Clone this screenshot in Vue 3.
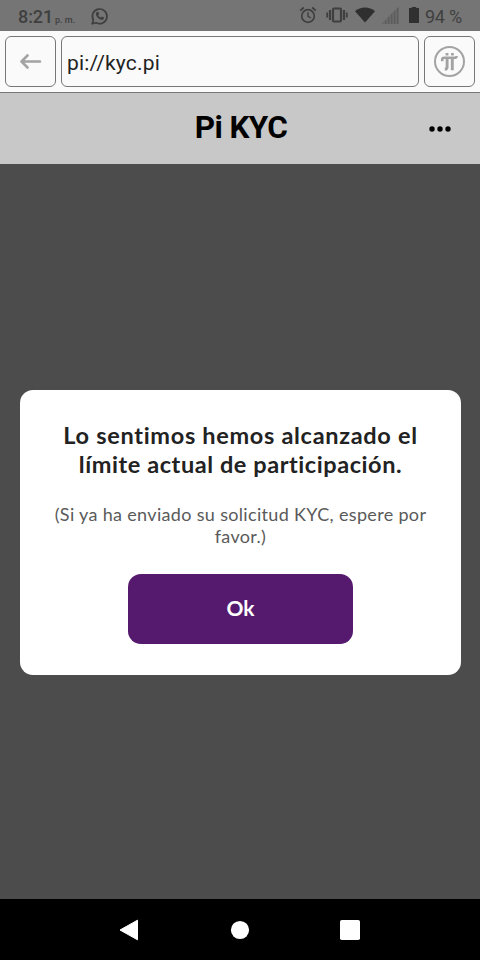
<script setup>
import { ref } from 'vue'

const address = ref('pi://kyc.pi')
const signalBars = [0, 1, 2, 3, 4]
</script>

<template>
  <div class="screen">
    <header class="status">
      <span class="clock">8:21</span>
      <span class="meridiem">p. m.</span>
      <svg class="whatsapp" viewBox="0 0 18 18" width="18" height="18">
        <path d="M1.2 16.8 2.3 12.9A7.3 7.3 0 1 1 5.1 15.7Z" fill="none" stroke="currentColor" stroke-width="1.7" stroke-linejoin="round" />
        <path d="M6.2 4.8 7.4 5l.8 2-.9 1.2c.6 1.1 1.4 1.9 2.6 2.4l1.1-1.1 2 1c.2 1.5-.9 2.4-2.3 2.4-2.8-.3-5.7-3.2-5.8-5.8 0-1 .5-2 1.3-2.3Z" fill="currentColor" />
      </svg>
      <svg class="alarm" viewBox="0 0 18 18" width="18" height="18" fill="none" stroke="currentColor">
        <circle cx="9" cy="10" r="6.300" stroke-width="1.700" />
        <path d="M1.200 4.600 4.800 1.500M16.800 4.600 13.200 1.500" stroke-width="1.800" />
        <path d="M9 6.200V10.300L12 12" stroke-width="1.400" />
      </svg>
      <svg class="vibrate" viewBox="0 0 22 16" width="22" height="16" fill="none" stroke="currentColor">
        <rect x="7" y="1.500" width="8" height="13" rx="1" stroke-width="2.200" />
        <path d="M4 3V13M18 3V13" stroke-width="2.200" />
        <path d="M1.200 5.500V10.500M20.800 5.500V10.500" stroke-width="1.800" />
      </svg>
      <svg class="wifi" viewBox="0 0 20 16" width="20" height="16">
        <path d="M0 4.200C5.500-.8 14.500-.8 20 4.200L10 15.500Z" fill="currentColor" />
      </svg>
      <svg class="signal" viewBox="0 0 18 18" width="18" height="18">
        <path d="M0 18 18 0V18Z" fill="#6a6a6a" />
        <rect v-for="i in signalBars" :key="i" :x="i * 3 + 4" :y="14 - i * 3" width="1.2" :height="i * 3 + 4" fill="#5d5d5d" />
      </svg>
      <svg class="battery" viewBox="0 0 10 16" width="10" height="16">
        <path d="M0 1H2.800V0H7.200V1H10V16H0Z" fill="currentColor" />
      </svg>
      <span class="percent">94 %</span>
    </header>

    <nav class="toolbar">
      <button class="tool" aria-label="Atrás">
        <svg viewBox="0 0 22 16" width="22" height="16" fill="none" stroke="#a3a3a3" stroke-width="2.600" stroke-linecap="round" stroke-linejoin="round">
          <path d="M20 7.500H2M7.500 1.500 1.500 7.500 7.500 13.500" />
        </svg>
      </button>
      <div class="address">{{ address }}</div>
      <button class="tool" aria-label="Pi">
        <svg viewBox="0 0 32 32" width="32" height="32" fill="none" stroke="#a3a3a3">
          <circle cx="15.500" cy="15.500" r="14.500" stroke-width="2" />
          <path d="M8.200 15.200V13.800C8.200 12.400 9 11.800 10.300 11.800H20.500C21.800 11.800 22.600 11.500 22.600 10" stroke-width="2.600" />
          <path d="M13.100 12V21C13.100 22.700 12.500 23.200 10.800 23.200M18.300 12V24.200" stroke-width="2.900" />
          <path d="M11.600 8.300H14.400M17 8.300H19.800" stroke-width="2.600" />
        </svg>
      </button>
    </nav>

    <div class="titlebar">
      <h1>Pi KYC</h1>
      <svg class="more" viewBox="0 0 22 6" width="22" height="6">
        <circle cx="3" cy="3" r="2.700" />
        <circle cx="11" cy="3" r="2.700" />
        <circle cx="19" cy="3" r="2.700" />
      </svg>
    </div>

    <main class="overlay">
      <section class="dialog">
        <h2><span class="first">Lo sentimos hemos alcanzado el</span><br><span class="second">límite actual de participación.</span></h2>
        <p>(Si ya ha enviado su solicitud KYC, espere por<br>favor.)</p>
        <button class="ok">Ok</button>
      </section>
    </main>

    <footer class="navbar">
      <svg viewBox="0 0 20 22" width="20" height="22"><path d="M0 11 17.500 1.200V20.800Z" fill="#fff" stroke="#fff" stroke-linejoin="round" /></svg>
      <svg viewBox="0 0 20 22" width="20" height="22"><circle cx="10" cy="11" r="9.100" fill="#fff" /></svg>
      <svg viewBox="0 0 20 22" width="20" height="22"><rect y="1" width="20" height="20" rx="1.800" fill="#fff" /></svg>
    </footer>
  </div>
</template>

<style>
body {
  margin: 0;
}
</style>

<style scoped>
.screen {
  width: 480px;
  height: 960px;
  display: flex;
  flex-direction: column;
  overflow: hidden;
  background: #4c4c4c;
  font-family: Roboto, sans-serif;
}
button {
  font: inherit;
  padding: 0;
}
svg {
  display: block;
  flex: none;
  overflow: visible;
}
.status {
  box-sizing: border-box;
  height: 31px;
  padding: 2px 0 0 18px;
  display: flex;
  align-items: center;
  background: #757575;
  color: #3f3f3f;
  white-space: nowrap;
}
.clock {
  width: 37px;
  font-size: 18px;
  font-weight: 500;
  letter-spacing: -0.1px;
}
.meridiem {
  width: 36px;
  padding-top: 6px;
  font-size: 9px;
  font-weight: 500;
}
.whatsapp {
  margin-top: -2px;
}
.alarm {
  margin: -3px 0 0 190px;
}
.vibrate {
  margin: -3px 0 0 9px;
}
.wifi {
  margin: -4px 0 0 7px;
  color: #2f2f2f;
}
.signal {
  margin: -3px 0 0 6px;
}
.battery {
  margin: -4px 0 0 10px;
  color: #303030;
}
.percent {
  margin-left: 6px;
  font-size: 18px;
  letter-spacing: -0.25px;
}
.toolbar {
  box-sizing: border-box;
  height: 62px;
  padding: 5px 5px 0;
  display: flex;
  gap: 5px;
  background: #fafafa;
  border-bottom: 1px solid #777;
}
.tool,
.address {
  box-sizing: border-box;
  height: 51px;
  border: 1px solid #777;
  border-radius: 6px;
  background: #fafafa;
}
.tool {
  width: 51px;
  display: flex;
  align-items: center;
  justify-content: center;
}
.address {
  flex: 1;
  padding-left: 5px;
  font-size: 21px;
  line-height: 52px;
  letter-spacing: 0.2px;
  color: #222;
}
.titlebar {
  height: 71px;
  display: grid;
  grid-template-columns: 1fr auto 1fr;
  align-items: center;
  background: #c8c8c8;
}
h1 {
  grid-column: 2;
  margin: 0;
  padding: 0 0 2px 2px;
  font-size: 31.5px;
  line-height: 36px;
  font-weight: 700;
  letter-spacing: -0.6px;
}
.more {
  justify-self: end;
  margin-right: 29px;
}
.overlay {
  flex: 1;
  display: flex;
  align-items: center;
  justify-content: center;
}
.dialog {
  box-sizing: border-box;
  width: 441px;
  height: 285px;
  margin: 2px 0 0 1px;
  padding-top: 31px;
  border-radius: 13px;
  background: #fff;
  text-align: center;
  white-space: nowrap;
}
h2 {
  margin: 0;
  font: 700 23.5px/29px Lato, sans-serif;
  color: #222;
}
.first {
  letter-spacing: 0.69px;
}
.second {
  letter-spacing: 0.57px;
}
p {
  margin: 24px 0 27px;
  font: 400 18px/22px Lato, sans-serif;
  letter-spacing: 0.33px;
  color: #5a5a5a;
}
.ok {
  width: 225px;
  height: 70px;
  padding-bottom: 2px;
  border: 0;
  border-radius: 13px;
  background: #551a6e;
  color: #fff;
  font: 700 21px/26px Lato, sans-serif;
}
.navbar {
  height: 61px;
  display: flex;
  align-items: center;
  justify-content: center;
  gap: 90px;
  background: #000;
}
</style>
